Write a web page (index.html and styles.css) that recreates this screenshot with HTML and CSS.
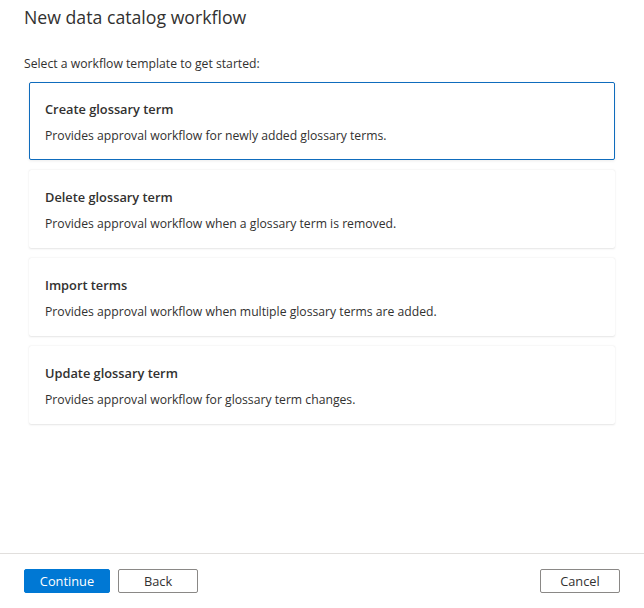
FILE: index.html
```html
<!DOCTYPE html>
<html lang="en">
<head>
<meta charset="utf-8">
<title>New data catalog workflow</title>
<link rel="stylesheet" href="styles.css">
</head>
<body>
<div class="panel">
  <main class="content">
    <h1 class="title">New data catalog workflow</h1>
    <p class="intro">Select a workflow template to get started:</p>
    <div class="cards">
      <div class="card selected">
        <div class="card-title">Create glossary term</div>
        <div class="card-desc">Provides approval workflow for newly added glossary terms.</div>
      </div>
      <div class="card">
        <div class="card-title">Delete glossary term</div>
        <div class="card-desc">Provides approval workflow when a glossary term is removed.</div>
      </div>
      <div class="card">
        <div class="card-title">Import terms</div>
        <div class="card-desc">Provides approval workflow when multiple glossary terms are added.</div>
      </div>
      <div class="card">
        <div class="card-title">Update glossary term</div>
        <div class="card-desc">Provides approval workflow for glossary term changes.</div>
      </div>
    </div>
  </main>
  <footer class="footer">
    <button class="btn primary">Continue</button>
    <button class="btn">Back</button>
    <span class="spacer"></span>
    <button class="btn">Cancel</button>
  </footer>
</div>
</body>
</html>
```
FILE: styles.css
```css
* { box-sizing: border-box; }
html, body { margin: 0; padding: 0; background: #fff; }
body {
  font-family: "Open Sans", "Noto Sans", sans-serif;
  color: #323130;
  width: 644px;
  height: 608px;
  overflow: hidden;
}
.panel {
  display: flex;
  flex-direction: column;
  height: 608px;
}
.content {
  flex: 1;
  padding: 4px 29px 0 24px;
}
.title {
  margin: 0;
  font-size: 17.7px;
  font-weight: 400;
  line-height: 26px;
  color: #323130;
}
.intro {
  margin: 26px 0 0;
  font-size: 12.2px;
  line-height: 16px;
}
.cards {
  display: flex;
  flex-direction: column;
  gap: 10px;
  margin-top: 10px;
  padding-left: 5px;
}
.card {
  height: 78px;
  padding: 17px 16px 0 15px;
  background: #fff;
  border: 1px solid transparent;
  box-shadow: 0 0.5px 2px rgba(0,0,0,0.1), 0 0 1px rgba(0,0,0,0.06);
  border-radius: 2px;
}
.card.selected {
  border-color: #0f6cbd;
  box-shadow: 0 1px 3px rgba(0,0,0,0.08);
}
.card-title {
  font-size: 12.8px;
  font-weight: 600;
  line-height: 18px;
}
.card-desc {
  margin-top: 10px;
  font-size: 12.2px;
  line-height: 16px;
}
.footer {
  display: flex;
  gap: 8px;
  height: 55px;
  border-top: 1px solid #e1dfdd;
  padding: 15px 24px 15px 24px;
  align-items: flex-start;
}
.spacer { flex: 1; }
.btn {
  font-family: inherit;
  font-size: 12.8px;
  height: 24px;
  min-width: 80px;
  padding: 0 12px;
  border: 1px solid #8a8886;
  background: #fff;
  color: #323130;
  border-radius: 2px;
  line-height: 22px;
}
.btn.primary {
  min-width: 86px;
  background: #0078d4;
  border-color: #0078d4;
  color: #fff;
}
```
